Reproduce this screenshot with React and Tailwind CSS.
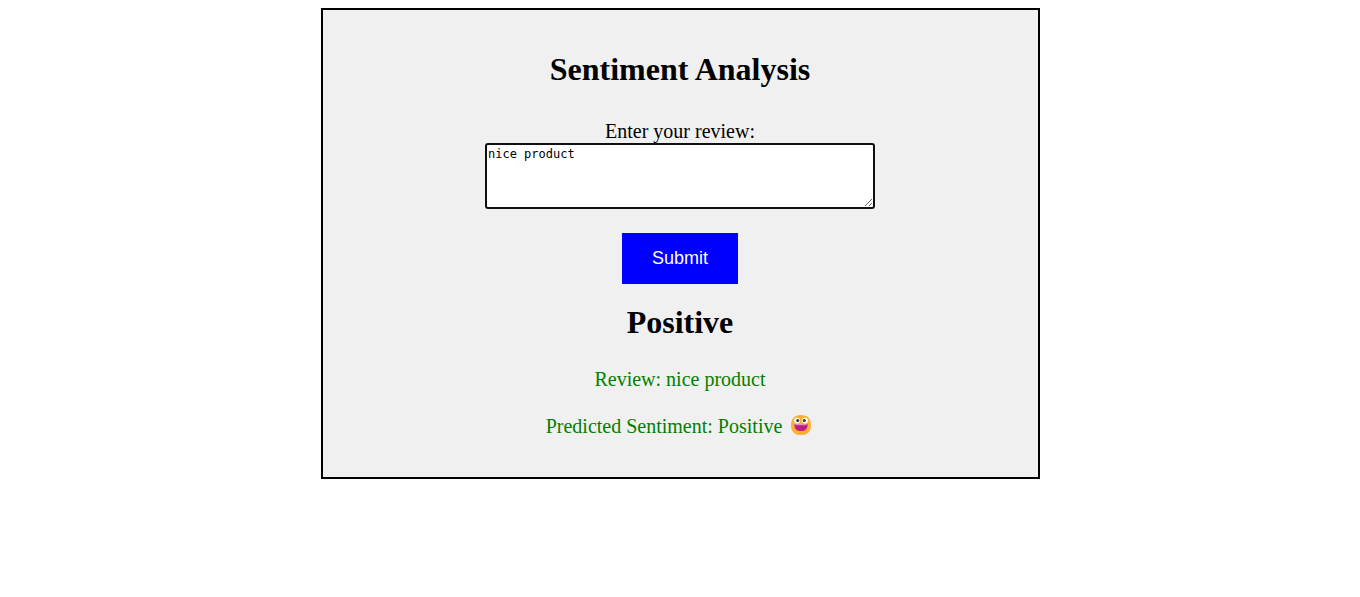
import { useState } from "react";

function GrinningFace() {
  return (
    <svg viewBox="0 0 20 20" role="img" aria-label="Grinning face" className="mr-[3px] mb-1 ml-[9px] inline-block size-5">
      <path d="M10 0C16.4 0 20 3.6 20 10.2S16.4 20 10 20 0 16.8 0 10.2 3.6 0 10 0Z" fill="#fcb033" />
      <circle cx="6" cy="5.6" r="2.9" fill="#fff" />
      <circle cx="14" cy="5.6" r="2.9" fill="#fff" />
      <circle cx="6.7" cy="5.6" r="1.5" fill="#30303a" />
      <circle cx="13.3" cy="5.6" r="1.5" fill="#30303a" />
      <path d="M3.3 9.2H16.7C16.7 13.8 14 16.1 10 16.1S3.3 13.8 3.3 9.2Z" fill="#bf1b80" />
      <path d="M4.4 9.2H15.6V10.2H4.4Z" fill="#e3a3c8" />
    </svg>
  );
}

export default function App() {
  const [review, setReview] = useState("nice product");
  return (
    <main className="min-h-screen bg-white p-2 font-['Liberation_Serif',serif] text-black">
      <form
        onSubmit={(e) => e.preventDefault()}
        className="mx-auto flex max-w-[719px] flex-col items-center border-2 border-black bg-[#f0f0f0] px-5 pt-10 pb-[39px] text-center text-xl leading-[23px]"
      >
        <h1 className="text-[32px] leading-[38px] font-bold">Sentiment Analysis</h1>
        <label htmlFor="review" className="mt-8">Enter your review:</label>
        <textarea
          id="review"
          value={review}
          onChange={(e) => setReview(e.target.value)}
          className="h-[66px] w-[390px] max-w-full rounded-[3px] border-2 border-[#101010] bg-white p-px font-['DejaVu_Sans_Mono',monospace] text-xs leading-[17px] outline-none"
        />
        <button type="submit" className="mt-6 bg-[#0000ff] px-[30px] py-[15px] font-['Liberation_Sans',sans-serif] text-lg leading-[21px] text-white">
          Submit
        </button>
        <h2 className="mt-5 text-[32px] leading-9 font-bold">Positive</h2>
        <p className="mt-7 text-[#008000]">Review: nice product</p>
        <p className="mt-6 flex h-[23px] items-center text-[#008000]">
          Predicted Sentiment: Positive <GrinningFace />
        </p>
      </form>
    </main>
  );
}
